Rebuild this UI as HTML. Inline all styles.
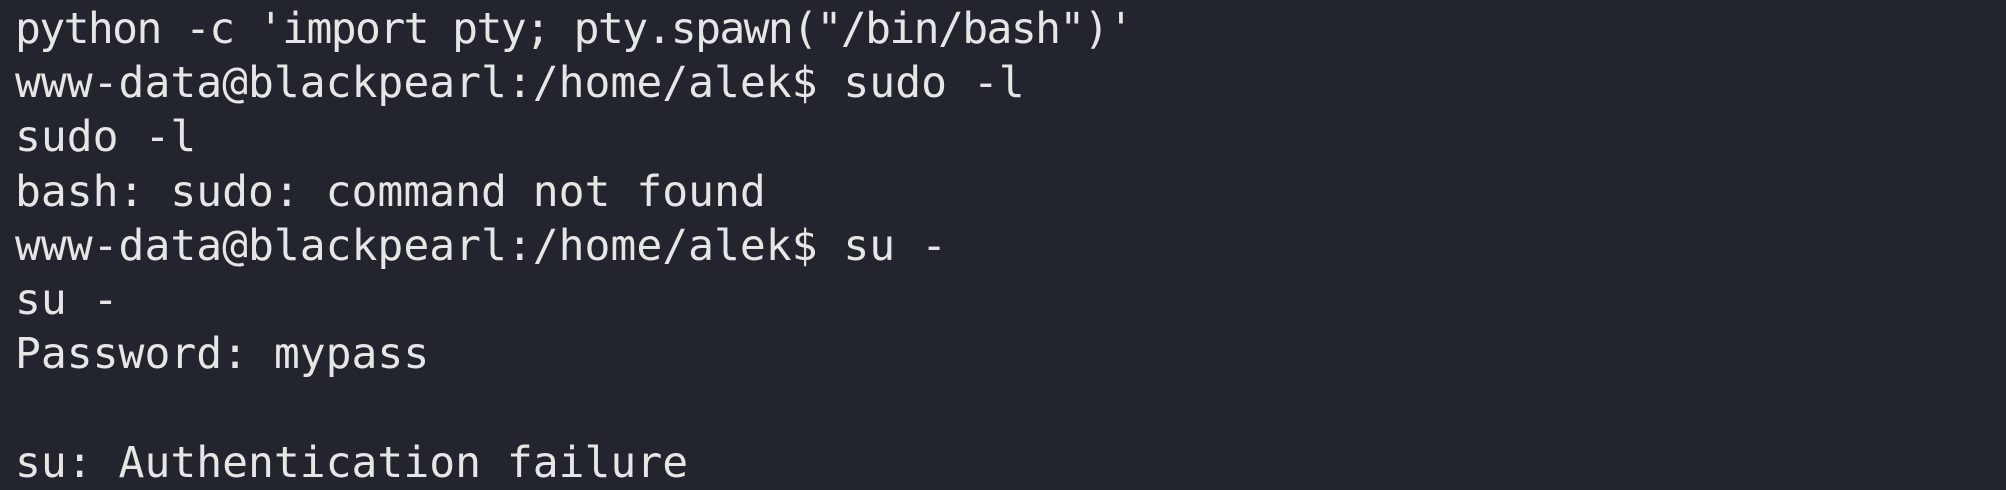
<!DOCTYPE html>
<html><head><meta charset="utf-8"><style>
html,body{margin:0;padding:0;}
body{width:2006px;height:490px;background:#22252d;overflow:hidden;}
pre{margin:0;padding:2px 0 0 15px;font-family:"DejaVu Sans Mono","Liberation Mono",monospace;font-size:43px;line-height:54.2px;color:#e6e6e6;}
.a{letter-spacing:-1.6px;}
</style></head><body><pre><span class="a">python -c 'import pty; pty.spawn("/bin/bash")'</span>
www-data@blackpearl:/home/alek$ sudo -l
sudo -l
bash: sudo: command not found
www-data@blackpearl:/home/alek$ su -
su -
Password: mypass

su: Authentication failure</pre></body></html>
